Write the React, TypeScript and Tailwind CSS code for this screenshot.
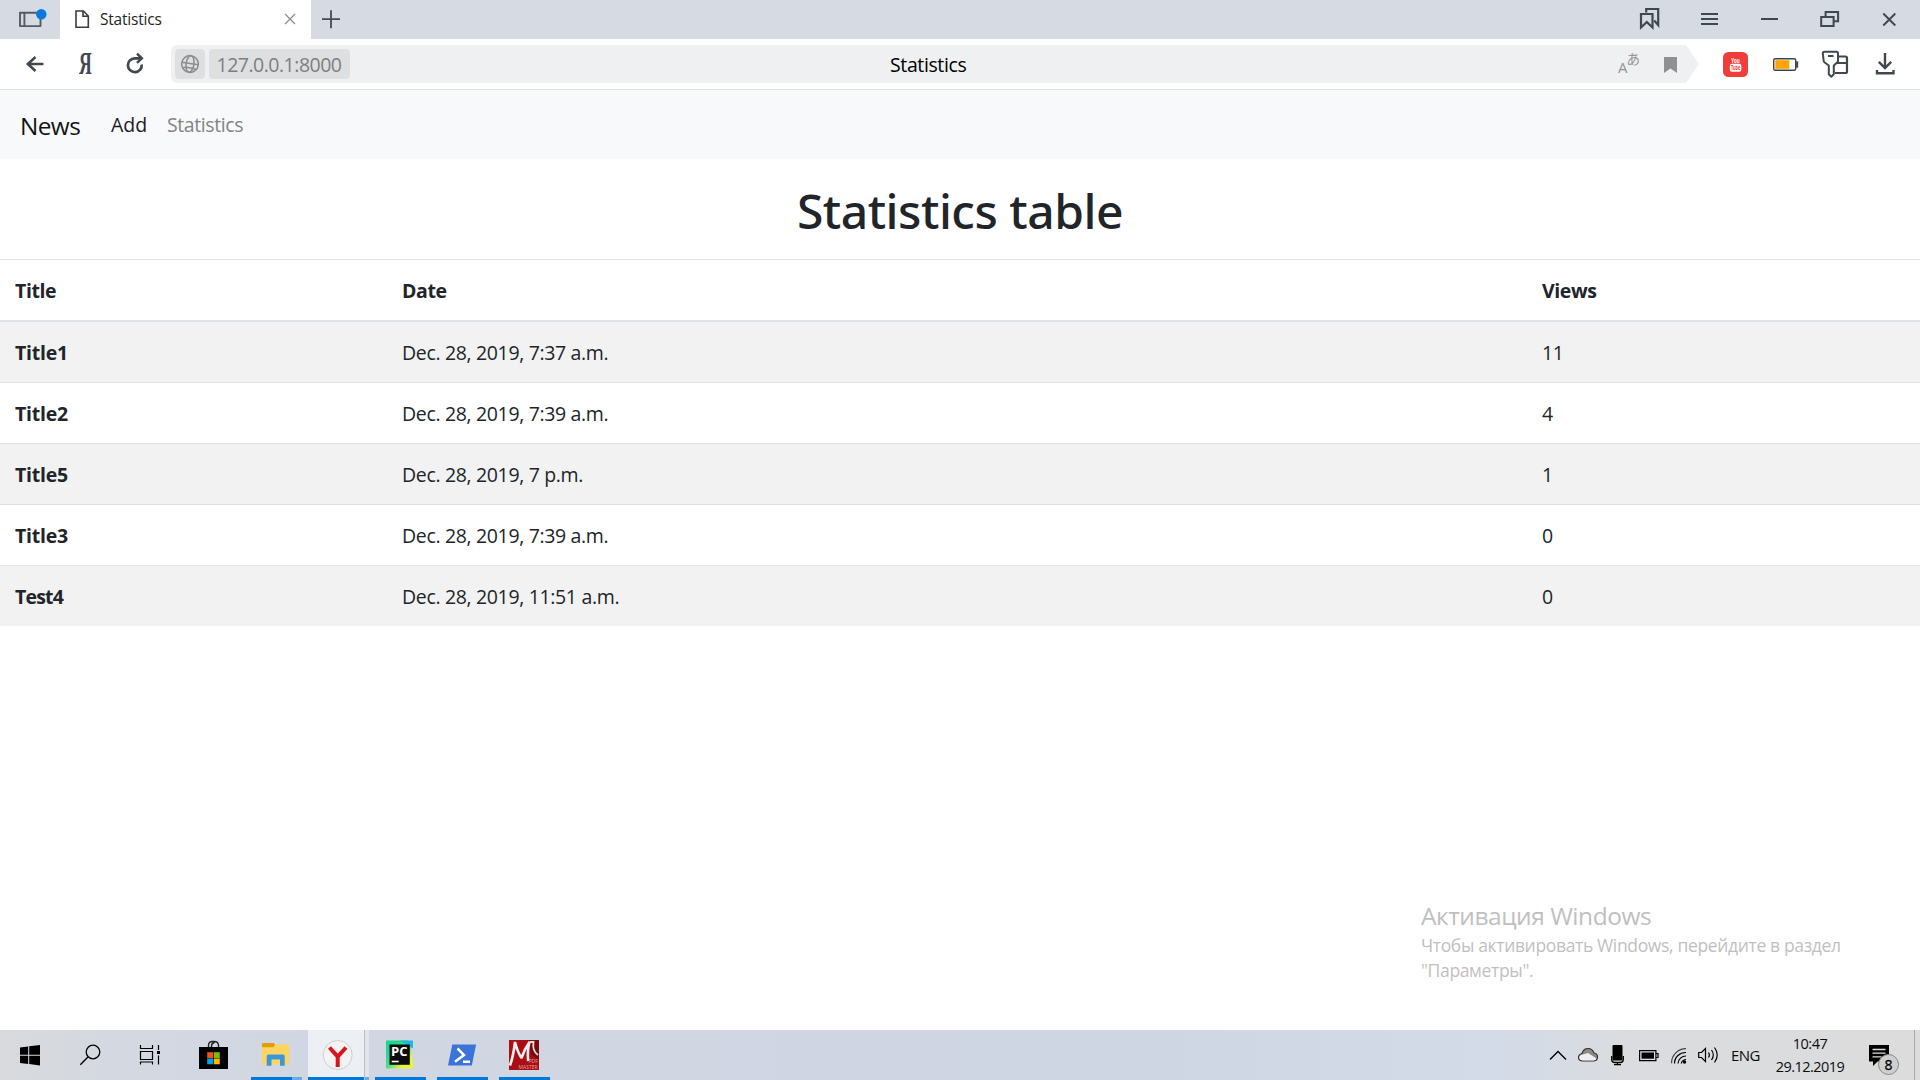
import type { ReactNode } from "react";

type IconProps = { w: number; h: number; className?: string; children: ReactNode };

function Icon({ w, h, className = "", children }: IconProps) {
  return (
    <svg width={w} height={h} viewBox={`0 0 ${w} ${h}`} fill="none" className={`block shrink-0 ${className}`}>
      {children}
    </svg>
  );
}

const rows = [
  { title: "Title1", date: "Dec. 28, 2019, 7:37 a.m.", views: 11 },
  { title: "Title2", date: "Dec. 28, 2019, 7:39 a.m.", views: 4 },
  { title: "Title5", date: "Dec. 28, 2019, 7 p.m.", views: 1 },
  { title: "Title3", date: "Dec. 28, 2019, 7:39 a.m.", views: 0 },
  { title: "Test4", date: "Dec. 28, 2019, 11:51 a.m.", views: 0 },
];

function TabStrip() {
  const c = "#3f484f";
  return (
    <div className="flex h-[39px] bg-[#d6dae2]">
      <Icon w={60} h={39}>
        <path d="M20 12.7h20.5v13.400h-20.500zM24.400 12.700v13.400" stroke="#565b61" strokeWidth="1.900" strokeLinejoin="round" />
        <circle cx="41.300" cy="14.300" r="5.200" fill="#0a78dd" />
      </Icon>
      <div className="flex w-[251px] items-center bg-white">
        <Icon w={40} h={39}>
          <path d="M16 11h7.500l4.800 5v11.300H16zM23 11v5.200h5.300" stroke="#3c3c3c" strokeWidth="1.600" />
        </Icon>
        <span className="flex-1 text-[15.5px] tracking-[-0.2px] text-[#262626]">Statistics</span>
        <Icon w={42} h={39}>
          <path d="M16 14l10 10M26 14l-10 10" stroke="#8a8a8a" strokeWidth="1.200" />
        </Icon>
      </div>
      <Icon w={40} h={39}>
        <path d="M11 19.200h18M20 10.200v18" stroke="#444b52" strokeWidth="1.800" />
      </Icon>
      <div className="flex-1" />
      <Icon w={60} h={39}>
        <path d="M26.200 12.500V9h12v16l-4-4.500" stroke={c} strokeWidth="2.200" />
        <path d="M21 14h11.500v13.500l-5.700-5.500-5.800 5.500z" stroke={c} strokeWidth="2.200" />
      </Icon>
      <Icon w={60} h={39}>
        <path d="M21 14h17M21 19h17M21 24h17" stroke={c} strokeWidth="2" />
      </Icon>
      <Icon w={60} h={39}>
        <path d="M21 19h17" stroke={c} strokeWidth="2" />
      </Icon>
      <Icon w={60} h={39}>
        <path d="M25.600 16.500v-4.400h12.500v9.200h-4.500M21.200 17h12.400v9H21.200z" stroke={c} strokeWidth="2" />
      </Icon>
      <Icon w={60} h={39}>
        <path d="M23.300 13.500l12 12M35.300 13.500l-12 12" stroke={c} strokeWidth="1.900" />
      </Icon>
    </div>
  );
}

function Toolbar() {
  const c = "#3f484f";
  return (
    <div className="flex h-[51px] items-center border-b border-[#dfdfdf] bg-white">
      <Icon w={60} h={50} className="ml-[5px]">
        <path d="M38.500 25H22.500M30.500 18L22.800 25l7.700 7" stroke={c} strokeWidth="2.500" />
      </Icon>
      <div className="flex h-[50px] w-[40px] items-center justify-center">
        <span className="block scale-x-[0.56] pb-px font-['Liberation_Serif'] text-[31.5px] font-bold leading-none text-[#3f484f]">Я</span>
      </div>
      <Icon w={60} h={50}>
        <path d="M36.700 25.500A6.900 6.900 0 1 1 29.800 19.300H36.500" stroke={c} strokeWidth="2.700" />
        <path d="M32 14.700l4.800 4.600-4.800 4.600" stroke={c} strokeWidth="2.500" />
      </Icon>
      <div className="ml-[6px] flex h-[38px] w-[1528px] items-center rounded-l-[6px] bg-[#eff0f2] pl-1 [clip-path:polygon(0_0,1515px_0,1528px_50%,1515px_100%,0_100%)]">
        <div className="flex h-[30px] w-[30px] items-center justify-center rounded-[4px] bg-[#dedfe1]">
          <Icon w={20} h={20}>
            <g stroke="#8d8d8d" strokeWidth="1.500" transform="rotate(8 10 10)">
              <circle cx="10" cy="10" r="8.400" />
              <ellipse cx="10" cy="10" rx="3.900" ry="8.400" />
              <path d="M1.600 9.500h16.800M3 14.800c3.500-1.500 10.500-1.500 14 0" />
            </g>
          </Icon>
        </div>
        <div className="ml-1 flex h-[30px] w-[141px] items-center rounded-[4px] bg-[#dedfe1] pl-[7.5px] pt-px">
          <span className="text-[19.5px] leading-[30px] tracking-[-0.5px] text-[#7d7e80]">127.0.0.1:8000</span>
        </div>
        <span className="flex-1 pl-[540px] pt-[2px] text-[19.5px] leading-[30px] tracking-[-0.38px] text-black">Statistics</span>
        <div className="flex w-[29px] items-center text-[#929395]">
          <span className="pt-[7px] text-[15px] leading-none">A</span>
          <span className="-ml-px pb-[10px] font-['Noto_Sans_CJK_JP'] text-[13.5px] leading-none">あ</span>
        </div>
        <Icon w={50} h={38} className="mr-[2px]">
          <path d="M17 12h13v16l-6.500-4.500-6.500 4.500z" fill="#8f9092" />
        </Icon>
      </div>
      <Icon w={50} h={50} className="ml-[11px]">
        <rect x="13" y="13" width="25" height="25" rx="5.500" fill="#f03d37" />
        <text x="25.500" y="23.800" textAnchor="middle" textLength="8.500" lengthAdjust="spacingAndGlyphs" fontSize="7" fontWeight="700" fill="#fff" fontFamily="Open Sans">You</text>
        <rect x="19.800" y="24.800" width="11.600" height="8" rx="2.200" fill="#fff" />
        <text x="25.600" y="31.400" textAnchor="middle" textLength="9.400" lengthAdjust="spacingAndGlyphs" fontSize="6.500" fontWeight="700" fill="#f03d37" fontFamily="Open Sans">Tube</text>
      </Icon>
      <Icon w={50} h={50}>
        <rect x="13.700" y="19.700" width="22" height="11.600" rx="1.600" stroke="#3a444c" strokeWidth="1.400" />
        <rect x="15.300" y="21.200" width="14" height="8.600" fill="#ffa400" />
        <path d="M36.800 23h.7v5h-.7z" stroke="#3a444c" strokeWidth="1.300" />
      </Icon>
      <Icon w={50} h={50}>
        <path d="M27 17.500h8.500q1.500 0 1.500 1.500v13.500q0 1.500-1.500 1.500H25M27 24h10" stroke={c} strokeWidth="2.200" />
        <path d="M14.500 12.800h11.800q1.700 0 1.700 1.700v7.500q0 .8-.6 1.300l-3.600 3.200v8.800l-2.500 2.400-2.500-2.400v-8.800l-4.400-3.200q-.6-.5-.7-1.300l-.9-7.500q0-1.700 1.700-1.700z" fill="#fff" stroke={c} strokeWidth="2" strokeLinejoin="round" />
        <path d="M18 17h5.500" stroke={c} strokeWidth="2" />
      </Icon>
      <Icon w={50} h={50}>
        <path d="M25 14v14.500M18.800 22.800L25 29l6.200-6.200M17 31v3.200h16.500V31" stroke={c} strokeWidth="2.400" />
      </Icon>
    </div>
  );
}

function Page() {
  return (
    <div className="h-[940px] bg-white text-[19.5px] leading-[30px] text-[#212529]">
      <nav className="flex h-[69px] items-center bg-[#f8f9fb] pl-5">
        <span className="w-[91px] pt-[2px] text-[24.4px] tracking-[-0.6px] text-[#141414]">News</span>
        <span className="w-[56px] text-[#1b1b1b]">Add</span>
        <span className="tracking-[-0.4px] text-[#828384]">Statistics</span>
      </nav>
      <h1 className="pb-[18px] pt-[22px] text-center font-['Noto_Sans'] text-[48px] font-medium leading-[60px] tracking-[-0.47px]">
        Statistics table
      </h1>
      <table className="w-full table-fixed border-separate border-spacing-0">
        <thead>
          <tr className="text-left tracking-[-0.4px]">
            <th className="w-[387px] border-b-2 border-t border-[#dee2e6] px-[15px] pb-[14px] pt-[16px] font-bold">Title</th>
            <th className="w-[1140px] border-b-2 border-t border-[#dee2e6] px-[15px] pb-[14px] pt-[16px] font-bold">Date</th>
            <th className="border-b-2 border-t border-[#dee2e6] px-[15px] pb-[14px] pt-[16px] font-bold">Views</th>
          </tr>
        </thead>
        <tbody>
          {rows.map((row, i) => (
            <tr key={row.title} className={i % 2 ? "group bg-white" : "group bg-[#f2f2f2]"}>
              <th className="border-b border-[#dee2e6] px-[15px] pb-[14px] pt-[16px] text-left font-bold tracking-[-0.25px] group-last:border-b-0 group-last:tracking-[-0.8px]">{row.title}</th>
              <td className="border-b border-[#dee2e6] px-[15px] pb-[14px] pt-[16px] tracking-[-0.34px] group-last:border-b-0">{row.date}</td>
              <td className="border-b border-[#dee2e6] px-[15px] pb-[14px] pt-[16px] tracking-[-0.3px] group-last:border-b-0">{row.views}</td>
            </tr>
          ))}
        </tbody>
      </table>
    </div>
  );
}

function Taskbar() {
  return (
    <div className="flex h-[50px] bg-[linear-gradient(90deg,#d8dadd_0%,#d3d8e1_7%,#d0d6e2_20%,#cfd6e3_60%,#d3dbe8_78%,#dadcdf_85%,#dcdcdc_100%)] text-[#0d0d0d]">
      <Icon w={60} h={50}>
        <path d="M20 17.600l8.200-1.100v8.300H20zM29.200 16.300L40 15v9.800H29.200zM20 25.800h8.200V34L20 32.900zM29.200 25.800H40V35.500l-10.800-1.400z" fill="#000" />
      </Icon>
      <Icon w={60} h={50}>
        <circle cx="33" cy="22" r="6.800" stroke="#000" strokeWidth="1.300" />
        <path d="M28.200 26.800L20.300 34.800" stroke="#000" strokeWidth="1.400" />
      </Icon>
      <Icon w={68} h={50}>
        <path d="M20.500 15v3.500h12V15M20.500 21.500h12v8h-12zM20.500 34.500v-2.500h12v2.500M38.500 15v5M38.500 25.500v9" stroke="#000" strokeWidth="1.200" />
        <rect x="37" y="21" width="3" height="3" fill="#000" />
      </Icon>
      <Icon w={60} h={50}>
        <path d="M20.500 18v-2.500q0-4 4-4h1.500q4.500 0 4.500 4V18M23.500 18v-2q0-3 3-3.500" stroke="#222" strokeWidth="1.400" />
        <path d="M11 17h29v22H11z" fill="#000" />
        <path d="M19.200 22.200h6v5.800h-6z" fill="#f05022" />
        <path d="M25.800 22.200h6v5.800h-6z" fill="#7fba00" />
        <path d="M19.200 28.500h6v5.800h-6z" fill="#00a3ee" />
        <path d="M25.800 28.500h6v5.800h-6z" fill="#ffb900" />
      </Icon>
      <Icon w={60} h={50}>
        <path d="M14 14q0-1 1-1h10.500l1.500 1.500-1 3.500H14z" fill="#e39c0c" />
        <path d="M14 17.200h11.500l2-3H40q1 0 1 1V34.500H14z" fill="#ffd562" />
        <path d="M18.700 35.800V26q0-1.500 1.500-1.500h15q1.500 0 1.500 1.500v9.800H32v-6.300h-8.500v6.300z" fill="#3b97dd" />
        <path d="M3 47h41v3H3z" fill="#0078d7" />
        <path d="M44 47h10v3H44z" fill="#62ade6" />
      </Icon>
      <div className="flex border-r border-[#b7bec9] bg-[#eceff3]">
        <Icon w={56} h={50}>
          <circle cx="29.700" cy="25" r="14.500" fill="#f3f3f3" stroke="#cfcfcf" />
          <path d="M21.500 17.500l8.200 9.200 8.300-9.200M29.700 26v11" stroke="#d8141c" strokeWidth="4" />
          <path d="M0 47h56v3H0z" fill="#0078d7" />
        </Icon>
      </div>
      <Icon w={4} h={50} className="bg-[#e2e5ec]">
        <path d="M0 47h4v3H0z" fill="#62ade6" />
      </Icon>
      <Icon w={64} h={50}>
        <defs>
          <linearGradient id="pc" x1="0" y1="0" x2="1" y2="1">
            <stop offset="0.2" stopColor="#1fd494" />
            <stop offset="0.5" stopColor="#4fdb8d" />
            <stop offset="0.75" stopColor="#e9f23c" />
          </linearGradient>
        </defs>
        <path d="M17 10.500h22l3 8 2.500 20H17z" fill="url(#pc)" />
        <path d="M31 10.500h13v8l-4-2z" fill="#1fb8e0" />
        <path d="M20.500 14.500h20.300v20.300H20.500z" fill="#0c0c0c" />
        <text x="22" y="26" fontSize="11.500" fontWeight="700" fill="#fff" fontFamily="Open Sans" textLength="16.500" lengthAdjust="spacingAndGlyphs">PC</text>
        <path d="M22.700 30.700h7v1.600h-7z" fill="#fff" />
        <path d="M6 47h51v3H6z" fill="#0078d7" />
      </Icon>
      <Icon w={60} h={50}>
        <path d="M19.300 14.500h23.800L38.800 35.500H15z" fill="#3b74d9" />
        <path d="M24.500 18.500l6.500 6.500-9 6.700M30 31.700h7" stroke="#fff" strokeWidth="2.500" />
        <path d="M4 47h51v3H4z" fill="#0078d7" />
      </Icon>
      <Icon w={64} h={50}>
        <path d="M16 10h30v30H16z" fill="#a80e14" />
        <path d="M36 10h10v20l-8-5z" fill="#7b0a0e" />
        <path d="M17 35.500q3.500-10 5-23.500 2.500 10 6.500 16 3-9 8-16-2.500 9-1.300 19" stroke="#f4eeee" strokeWidth="2.600" strokeLinejoin="bevel" />
        <path d="M36.500 12h4q-1.500 9 4.500 13" stroke="#e8dada" strokeWidth="1.800" />
        <text x="35.500" y="32.500" textLength="9.500" lengthAdjust="spacingAndGlyphs" fontSize="5.500" fill="#e0a0a0" fontFamily="Open Sans">PDF</text>
        <text x="25.500" y="38.800" fontSize="5" fill="#e0a0a0" fontFamily="Open Sans" textLength="19" lengthAdjust="spacingAndGlyphs">MASTER</text>
        <path d="M6 47h51v3H6z" fill="#0078d7" />
      </Icon>
      <div className="flex-1" />
      <Icon w={30} h={50}>
        <path d="M7 29.500l8-8 8 8" stroke="#000" strokeWidth="1.400" />
      </Icon>
      <Icon w={30} h={50}>
        <path d="M9 31q-3.500-.5-3.500-3.500t3.500-4q1.500-5 6-5 4.500 0 6 4.500 3.500.5 3.500 4t-3.500 4z" fill="#8a8a8a" stroke="#333" strokeWidth="1.200" />
        <path d="M9.500 30.400q-3.300-.4-3.300-2.900t4.300-3.200l4.500-1.300 8.500 5.500q-.6 1.900-3 1.900z" fill="#efefef" />
      </Icon>
      <Icon w={30} h={50}>
        <rect x="9.500" y="15" width="10" height="15.500" rx="1" fill="#000" />
        <path d="M8.700 26v3.500q0 3 3 3h5.600q3 0 3-3V26M14.500 32v2.500M11 34.600h7" stroke="#000" strokeWidth="1.300" />
      </Icon>
      <Icon w={30} h={50}>
        <path d="M6.600 20.600h16.300v10H6.600zM23.500 23.500h1.500v4h-1.500" stroke="#000" strokeWidth="1.200" />
        <path d="M8.500 22.500h12.500v6.200H8.500z" fill="#000" />
      </Icon>
      <Icon w={30} h={50}>
        <path d="M8.500 33.200A14.500 14.500 0 0 1 23 18.700" stroke="#444" strokeWidth="1.200" />
        <path d="M11.500 33.500A11 11 0 0 1 23 22.500M15 33.500a8 8 0 0 1 8-7.500M18.300 33.500q.5-3.500 4.700-4" stroke="#000" strokeWidth="1.200" />
        <circle cx="21.500" cy="32" r="1.700" fill="#000" />
      </Icon>
      <Icon w={30} h={50}>
        <path d="M5.700 22.500h2.800l4-4v13l-4-4H5.700z" stroke="#000" strokeWidth="1.200" />
        <path d="M15.500 22.500q1.800 2.500 0 5M18.500 20q3.600 5 0 10M21.500 17.500q5.500 7.500 0 15" stroke="#000" strokeWidth="1.200" />
      </Icon>
      <div className="flex w-[45px] items-center justify-center text-[15px] tracking-[-0.55px]">ENG</div>
      <div className="flex w-[85px] flex-col items-center pr-px pt-[2px] text-[14.5px] leading-[23px] tracking-[-0.52px]">
        <span>10:47</span>
        <span>29.12.2019</span>
      </div>
      <Icon w={61} h={50}>
        <path d="M16 15h20v16.500H24.500L20 36v-4.500h-4z" fill="#000" />
        <path d="M19.500 19.500h13M19.500 23.200h13M19.500 26.900h9" stroke="#dcdcdc" strokeWidth="1.300" />
        <circle cx="35.500" cy="34.500" r="10" fill="#cfcfcf" stroke="#888" strokeWidth="1" />
        <text x="35.500" y="39.500" textAnchor="middle" fontSize="14" fill="#000" stroke="#000" strokeWidth="0.300" fontFamily="Open Sans">8</text>
      </Icon>
      <div className="w-[6px] border-l border-[#a9a9a9]" />
    </div>
  );
}

export default function App() {
  return (
    <div className="relative flex h-[1080px] w-[1920px] flex-col overflow-hidden bg-white font-['Open_Sans','Noto_Sans',sans-serif]">
      <TabStrip />
      <Toolbar />
      <Page />
      <Taskbar />
      <div className="absolute left-[1421px] top-[898px] whitespace-nowrap text-[17.5px] leading-[25px] tracking-[-0.35px] text-[#bfbfbf]">
        <p className="text-[24.5px] leading-[35px] tracking-[-0.46px]">Активация Windows</p>
        <p>Чтобы активировать Windows, перейдите в раздел</p>
        <p>"Параметры".</p>
      </div>
    </div>
  );
}
